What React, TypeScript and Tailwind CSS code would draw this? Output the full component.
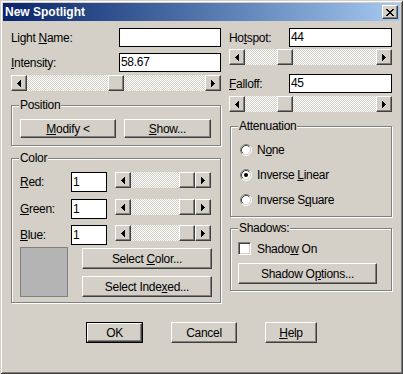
import type { ReactNode } from "react";

// classic 3D bevels
const raised =
  "bg-[#d4d0c8] border border-t-white border-l-white border-r-[#404040] border-b-[#404040] shadow-[inset_-1px_-1px_#808080]";
const track =
  "h-[16px] bg-[image:repeating-conic-gradient(#fff_0_25%,#d4d0c8_0_50%)] bg-[length:2px_2px]";

function Arrow({ dir }: { dir: "left" | "right" }) {
  return (
    <div className={`flex h-[16px] w-[16px] shrink-0 items-center justify-center ${raised}`}>
      <svg width="4" height="7" viewBox="0 0 4 7" shapeRendering="crispEdges">
        {dir === "left" ? (
          <path d="M0 3h1v1H0zM1 2h1v3H1zM2 1h1v5H2zM3 0h1v7H3z" fill="#000" />
        ) : (
          <path d="M3 3h1v1H3zM2 2h1v3H2zM1 1h1v5H1zM0 0h1v7H0z" fill="#000" />
        )}
      </svg>
    </div>
  );
}

function Slider({ before, className = "" }: { before: string; className?: string }) {
  return (
    <div className={`flex h-[16px] ${className}`}>
      <Arrow dir="left" />
      <div className={`shrink-0 ${track} ${before}`} />
      <div className={`h-[16px] w-[16px] shrink-0 ${raised}`} />
      <div className={`flex-1 ${track}`} />
      <Arrow dir="right" />
    </div>
  );
}

function Field({ value = "", className = "" }: { value?: string; className?: string }) {
  return (
    <div className={`h-[19px] border border-black bg-white pl-[1px] leading-[17px] ${className}`}>
      {value}
    </div>
  );
}

function Btn({
  children,
  className = "",
  isDefault = false,
}: {
  children: ReactNode;
  className?: string;
  isDefault?: boolean;
}) {
  if (isDefault) {
    return (
      <div className={`border border-black ${className}`}>
        <div className={`flex h-full items-center justify-center ${raised}`}>
          <span>{children}</span>
        </div>
      </div>
    );
  }
  return (
    <div className={`flex items-center justify-center ${raised} ${className}`}>
      <span>{children}</span>
    </div>
  );
}

function Group({
  label,
  className = "",
  children,
}: {
  label: string;
  className?: string;
  children?: ReactNode;
}) {
  return (
    <div
      className={`relative border border-[#808080] shadow-[inset_1px_1px_#fff,1px_1px_#fff] ${className}`}
    >
      <span className="absolute -top-[8px] left-[7px] bg-[#d4d0c8] px-[1px] leading-[14px]">
        {label}
      </span>
      {children}
    </div>
  );
}

function Radio({ checked = false }: { checked?: boolean }) {
  return (
    <svg width="12" height="12" viewBox="0 0 12 12" className="shrink-0">
      <circle cx="6" cy="6" r="5" fill="#fff" />
      <path d="M2.11 9.89A5.5 5.5 0 0 1 9.89 2.11" stroke="#808080" fill="none" />
      <path d="M9.89 2.11A5.5 5.5 0 0 1 2.11 9.89" stroke="#fff" fill="none" />
      <path d="M2.82 9.18A4.5 4.5 0 0 1 9.18 2.82" stroke="#404040" fill="none" />
      <path d="M9.18 2.82A4.5 4.5 0 0 1 2.82 9.18" stroke="#d4d0c8" fill="none" />
      {checked ? <circle cx="6" cy="6" r="2" fill="#000" /> : null}
    </svg>
  );
}

function ColorRow({ label, className = "" }: { label: ReactNode; className?: string }) {
  return (
    <div className={`flex items-start ${className}`}>
      <div className="flex h-[20px] w-[51px] items-center">
        <span>{label}</span>
      </div>
      <Field value="1" className="h-[20px] w-[36px] leading-[18px]" />
      <Slider before="w-[48px]" className="ml-[8px] w-[96px]" />
    </div>
  );
}

export default function App() {
  return (
    <div className="h-[374px] w-[403px] bg-[#d4d0c8] p-[3px] font-['Liberation_Sans',sans-serif] text-[12px] leading-[14px] tracking-[-0.3px] text-black shadow-[inset_1px_1px_#d4d0c8,inset_-1px_-1px_#404040,inset_2px_2px_#fff,inset_-2px_-2px_#808080]">
      {/* title bar */}
      <div className="flex h-[18px] items-center bg-linear-to-r from-[#0a246a] to-[#a6caf0] pl-[2px] pr-[2px]">
        <span className="flex-1 text-[12px] font-bold tracking-normal text-white">
          New Spotlight
        </span>
        <div className={`flex h-[14px] w-[16px] items-center justify-center ${raised}`}>
          <svg width="8" height="7" viewBox="0 0 8 7" shapeRendering="crispEdges">
            <path
              d="M0 0h2v1H0zM6 0h2v1H6zM1 1h2v1H1zM5 1h2v1H5zM2 2h4v1H2zM3 3h2v1H3zM2 4h4v1H2zM1 5h2v1H1zM5 5h2v1H5zM0 6h2v1H0zM6 6h2v1H6z"
              fill="#000"
            />
          </svg>
        </div>
      </div>

      <div className="flex items-start pl-[8px] pt-[7px]">
        {/* left column */}
        <div className="w-[210px]">
          <div className="flex h-[19px] items-center">
            <span className="w-[108px]">
              Light <u>N</u>ame:
            </span>
            <Field className="w-[102px]" />
          </div>
          <div className="mt-[6px] flex h-[19px] items-center">
            <span className="w-[108px]">
              <u>I</u>ntensity:
            </span>
            <Field value="58.67" className="w-[102px]" />
          </div>
          <Slider before="w-[81px]" className="mt-[3px] w-[210px]" />

          <Group label="Position" className="mt-[14px] h-[41px] w-[210px]">
            <div className="flex gap-[8px] pl-[8px] pt-[13px]">
              <Btn className="h-[19px] w-[96px]">
                <u>M</u>odify &lt;
              </Btn>
              <Btn className="h-[19px] w-[87px]">
                <u>S</u>how...
              </Btn>
            </div>
          </Group>

          <Group label="Color" className="mt-[12px] h-[145px] w-[210px]">
            <div className="pl-[8px] pt-[13px]">
              <ColorRow
                label={
                  <>
                    <u>R</u>ed:
                  </>
                }
              />
              <ColorRow
                className="mt-[7px]"
                label={
                  <>
                    <u>G</u>reen:
                  </>
                }
              />
              <ColorRow
                className="mt-[6px]"
                label={
                  <>
                    <u>B</u>lue:
                  </>
                }
              />
              <div className="mt-[2px] flex items-start">
                <div className="h-[50px] w-[48px] border border-[#808080] bg-[#b4b4b4]" />
                <div className="ml-[14px] mt-[1px] flex flex-col gap-[7px]">
                  <Btn className="h-[21px] w-[130px]">
                    Select <u>C</u>olor...
                  </Btn>
                  <Btn className="h-[21px] w-[130px]">
                    Select Inde<u>x</u>ed...
                  </Btn>
                </div>
              </div>
            </div>
          </Group>
        </div>

        {/* right column */}
        <div className="ml-[8px] w-[163px]">
          <div className="flex h-[19px] items-center">
            <span className="w-[60px]">
              Ho<u>t</u>spot:
            </span>
            <Field value="44" className="w-[103px]" />
          </div>
          <Slider before="w-[32px]" className="mt-[2px] w-[163px]" />
          <div className="mt-[9px] flex h-[19px] items-center">
            <span className="w-[60px]">
              <u>F</u>alloff:
            </span>
            <Field value="45" className="w-[103px]" />
          </div>
          <Slider before="w-[32px]" className="mt-[3px] w-[163px]" />

          <Group label="Attenuation" className="ml-[1px] mt-[14px] h-[91px] w-[162px]">
            <div className="flex flex-col gap-[11px] pl-[9px] pt-[16px]">
              <div className="flex h-[14px] items-center gap-[5px]">
                <Radio />
                <span>
                  N<u>o</u>ne
                </span>
              </div>
              <div className="flex h-[14px] items-center gap-[5px]">
                <Radio checked />
                <span>
                  Inverse <u>L</u>inear
                </span>
              </div>
              <div className="flex h-[14px] items-center gap-[5px]">
                <Radio />
                <span>
                  Inverse S<u>q</u>uare
                </span>
              </div>
            </div>
          </Group>

          <Group label="Shadows:" className="ml-[1px] mt-[11px] h-[63px] w-[162px]">
            <div className="pl-[7px] pt-[13px]">
              <div className="flex h-[13px] items-center gap-[6px]">
                <div className="h-[13px] w-[13px] shrink-0 border border-t-[#808080] border-l-[#808080] border-b-white border-r-white bg-white shadow-[inset_1px_1px_#404040,inset_-1px_-1px_#d4d0c8]" />
                <span>
                  Shado<u>w</u> On
                </span>
              </div>
              <Btn className="mt-[8px] h-[21px] w-[139px]">
                Shadow O<u>p</u>tions...
              </Btn>
            </div>
          </Group>
        </div>
      </div>

      {/* dialog buttons */}
      <div className="ml-[83px] mt-[19px] flex">
        <Btn isDefault className="h-[21px] w-[57px]">
          OK
        </Btn>
        <Btn className="ml-[28px] h-[21px] w-[66px]">Cancel</Btn>
        <Btn className="ml-[28px] h-[21px] w-[52px]">
          <u>H</u>elp
        </Btn>
      </div>
    </div>
  );
}
